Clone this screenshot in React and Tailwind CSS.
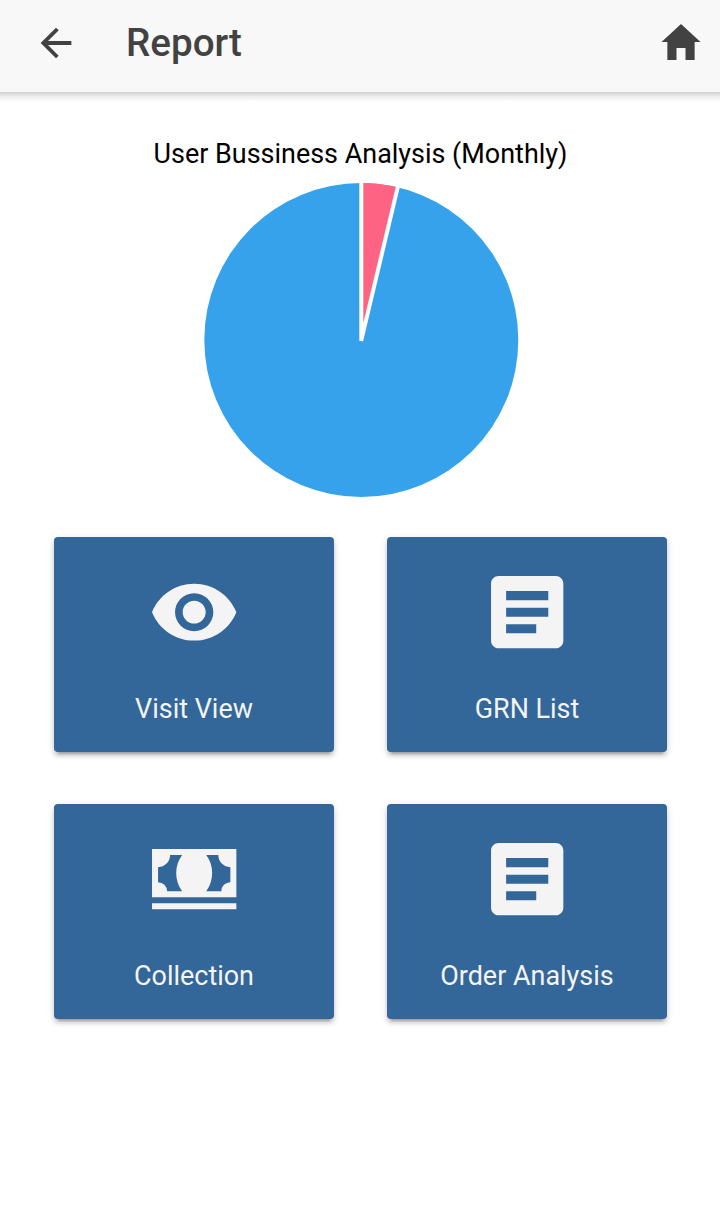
import React from "react";

function Icon({ className, children }) {
  return (
    <svg viewBox="0 0 512 512" fill="currentColor" fillRule="evenodd" className={className} aria-hidden="true">
      {children}
    </svg>
  );
}

const eye = (
  <path d="M256 105c-101.8 0-188.4 62.4-224 151 35.6 88.6 122.2 151 224 151s188.4-62.4 224-151c-35.6-88.6-122.2-151-224-151zm0 251.7c-56 0-101.8-45.3-101.8-100.7S200 155.3 256 155.3 357.8 200.6 357.8 256 312 356.7 256 356.7zm0-161.1c-33.6 0-61.1 27.2-61.1 60.4s27.5 60.4 61.1 60.4 61.1-27.2 61.1-60.4-27.5-60.4-61.1-60.4z" />
);

const list = (
  <path d="M408 64H104c-22 0-40 18-40 40v304c0 22 18 40 40 40h304c22 0 40-18 40-40V104c0-22-18-40-40-40zM304 368H144v-48h160v48zm64-88H144v-48h224v48zm0-88H144v-48h224v48z" />
);

const cash = (
  <>
    <path d="M32 384h448v32H32z" />
    <path d="M32 96h448v256H32zM128 128A64 64 0 0 1 64 192V272A48 48 0 0 1 112 320H192C150 264 150 184 192 128zM384 128A64 64 0 0 0 448 192V272A48 48 0 0 0 400 320H320C362 264 362 184 320 128z" />
  </>
);

const tiles = [
  { label: "Visit View", icon: eye },
  { label: "GRN List", icon: list },
  { label: "Collection", icon: cash },
  { label: "Order Analysis", icon: list },
];

function Tile({ label, icon }) {
  return (
    <button className="flex h-[215px] flex-col items-center rounded-[4px] bg-[#336699] pt-[27px] text-[#f4f4f4] shadow-[0_4px_4px_0_rgba(0,0,0,0.14),0_6px_2px_-4px_rgba(0,0,0,0.2),0_2px_8px_0_rgba(0,0,0,0.12)]">
      <Icon className="h-[96.4px] w-[96.4px]">{icon}</Icon>
      <span className="mt-[32.2px] text-[26.95px] leading-8">{label}</span>
    </button>
  );
}

export default function App() {
  return (
    <div className="flex min-h-[1232px] w-[720px] flex-col bg-white font-['Roboto',sans-serif]">
      <header className="flex h-[92px] items-start bg-[#f8f8f8] pl-[33px] pr-[15px] text-[#424242]">
        <Icon className="mt-[20px] h-[46px] w-[46px]">
          <path d="M427 234.625H167.296l119.702-119.702L256 85 85 256l171 171 29.922-29.924-118.626-119.701H427v-42.75z" />
        </Icon>
        <h1 className="ml-[47px] mt-[19px] text-[38.6px] font-medium leading-[48px]">Report</h1>
        <Icon className="ml-auto mt-[18px] h-[48px] w-[48px]">
          <path d="M208 448V320h96v128h97.6V256H464L256 64 48 256h62.4v192z" />
        </Icon>
      </header>
      <div className="h-[10px] bg-linear-to-b from-[#cfcfcf] via-[#ebebeb] via-40% to-white" />
      <main className="flex flex-col pt-[36px]">
        <h2 className="pl-px text-center text-[26.95px] leading-8 text-black">User Bussiness Analysis (Monthly)</h2>
        <svg viewBox="200 179 322 322" className="ml-[200px] mt-[9px] h-[322px] w-[322px]">
          <circle cx="361.3" cy="340" r="157" fill="#36a2eb" />
          <path d="M361.3 340V183A157 157 0 0 1 397.7 187.3Z" fill="#ff6384" />
          <path d="M361.3 341V181M361.1 341L398.2 185.2" stroke="#fff" strokeWidth="4" fill="none" />
        </svg>
        <div className="mt-[36px] grid grid-cols-2 gap-x-[53px] gap-y-[52px] pl-[54px] pr-[53px]">
          {tiles.map((tile) => (
            <Tile key={tile.label} {...tile} />
          ))}
        </div>
      </main>
    </div>
  );
}
